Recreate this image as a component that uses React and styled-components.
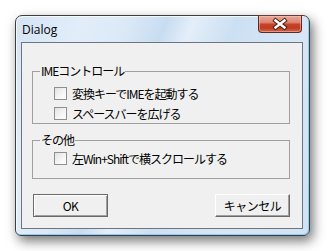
import React from "react";
import styled, { createGlobalStyle } from "styled-components";

const Global = createGlobalStyle`
  html, body {
    margin: 0;
    padding: 0;
    background: #ffffff;
  }
`;

export default function App() {
  return (
    <Page>
      <Global />
      <Window>
        <TitleBar>
          <Caption>Dialog</Caption>
          <CloseButton>
            <svg width="42" height="16" viewBox="0 0 42 16">
              <path d="M16.5 4.5 L25.5 11.5 M25.5 4.5 L16.5 11.5" stroke="#4a2018" strokeWidth="4.4" strokeLinecap="square" />
              <path d="M16.5 4.5 L25.5 11.5 M25.5 4.5 L16.5 11.5" stroke="#ffffff" strokeWidth="2.4" strokeLinecap="square" />
            </svg>
          </CloseButton>
        </TitleBar>
        <Client>
          <GroupBox $padTop={5} $padBottom={0}>
            <GroupLabel>IMEコントロール</GroupLabel>
            <CheckRow>
              <CheckBox />
              変換キーでIMEを起動する
            </CheckRow>
            <CheckRow>
              <CheckBox />
              スペースバーを広げる
            </CheckRow>
          </GroupBox>
          <GroupBox $padTop={1} $padBottom={10} $gap={16}>
            <GroupLabel>その他</GroupLabel>
            <CheckRow>
              <CheckBox />
              左Win+Shiftで横スクロールする
            </CheckRow>
          </GroupBox>
          <ButtonRow>
            <Button $default>OK</Button>
            <Button>キャンセル</Button>
          </ButtonRow>
        </Client>
      </Window>
    </Page>
  );
}

const Page = styled.div`
  width: 329px;
  height: 251px;
  padding: 15px 0 0 15px;
  box-sizing: border-box;
  overflow: hidden;
`;

const Window = styled.div`
  width: 295px;
  height: 221px;
  box-sizing: border-box;
  border: 1px solid #3a3f44;
  border-radius: 7px 7px 6px 6px;
  background: linear-gradient(
    112deg,
    #d3e4f5 0%,
    #e2edf9 18%,
    #dbe9f7 30%,
    #c8dcf1 40%,
    #e4eef9 47%,
    #cde0f3 58%,
    #d6e6f6 78%,
    #d0e2f4 100%
  );
  box-shadow: inset 1px 1px 0 rgba(255, 255, 255, 0.75),
    inset -1px -1px 0 #8ccdf3, 3px 5px 12px rgba(0, 0, 0, 0.55);
  display: flex;
  flex-direction: column;
`;

const TitleBar = styled.div`
  height: 26px;
  display: flex;
  justify-content: space-between;
  align-items: flex-start;
  padding: 0 7px 0 6px;
`;

const Caption = styled.div`
  font-family: "Open Sans", "Noto Sans", sans-serif;
  font-size: 12px;
  line-height: 14px;
  padding-top: 7px;
  color: #000;
`;

const CloseButton = styled.div`
  width: 42px;
  height: 16px;
  margin-top: -1px;
  border: 1px solid #5c2a22;
  border-top-color: #6a3a33;
  border-radius: 0 0 4px 4px;
  background: linear-gradient(
    to bottom,
    #e7a696 0%,
    #dc8671 40%,
    #c7432a 52%,
    #c23a22 75%,
    #d4674e 100%
  );
  box-shadow: inset 0 0 0 1px rgba(255, 210, 200, 0.45);
  display: flex;
  align-items: center;
  justify-content: center;
`;

const Client = styled.div`
  margin: 0 6px 6px 5px;
  flex: 1;
  border: 1px solid #6c7682;
  background: #f0f0f0;
  padding: 28px 12px 0 10px;
  font-family: "Noto Sans CJK JP", sans-serif;
  font-size: 12px;
  color: #000;
  display: flex;
  flex-direction: column;
`;

const GroupBox = styled.div`
  margin-top: ${(p) => p.$gap || 0}px;
  padding: 0 0 ${(p) => p.$padBottom}px 0;
  border: 1px solid #a0a0a0;
  display: flex;
  flex-direction: column;
  align-items: flex-start;
  gap: 0;
  & > :nth-child(2) {
    margin-top: ${(p) => p.$padTop}px;
  }
`;

const GroupLabel = styled.div`
  margin: -8px 0 0 7px;
  padding: 0 1px;
  height: 14px;
  line-height: 14px;
  background: #f0f0f0;
  letter-spacing: -1px;
`;

const CheckRow = styled.div`
  height: 20px;
  margin-left: 21px;
  display: flex;
  align-items: center;
  gap: 5px;
  letter-spacing: -1px;
  white-space: nowrap;
`;

const CheckBox = styled.span`
  width: 11px;
  height: 11px;
  flex: none;
  border: 1px solid #8e8f8f;
  background: linear-gradient(135deg, #e2e2e2 0%, #f6f6f6 60%, #ffffff 100%);
`;

const ButtonRow = styled.div`
  margin-top: 15px;
  display: flex;
  justify-content: space-between;
  padding: 0 0 0 1px;
`;

const Button = styled.div`
  width: 75px;
  height: 23px;
  box-sizing: border-box;
  border: 1px solid ${(p) => (p.$default ? "#6b6b6b" : "#ffffff")};
  border-right-color: #696969;
  border-bottom-color: #696969;
  box-shadow: ${(p) =>
    p.$default
      ? "inset 1px 1px 0 #ffffff, inset -1px -1px 0 #a0a0a0"
      : "inset -1px -1px 0 #a0a0a0, 0 0 0 0 transparent"};
  background: #f0f0f0;
  display: flex;
  align-items: center;
  justify-content: center;
  font-size: 12px;
  letter-spacing: -0.5px;
`;
